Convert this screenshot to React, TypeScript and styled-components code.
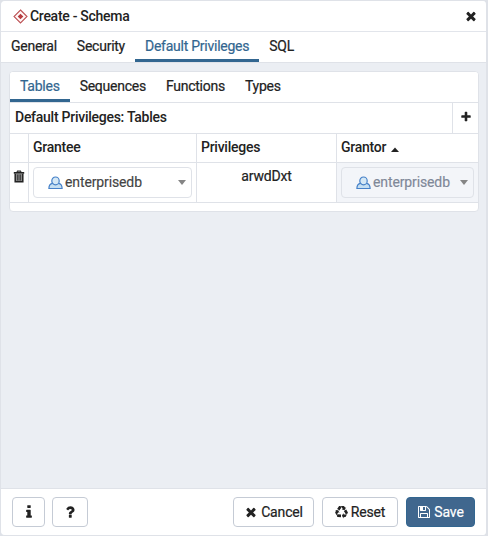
import React from "react";
import styled, { createGlobalStyle } from "styled-components";

const GlobalStyle = createGlobalStyle`
  * { box-sizing: border-box; }
  body { margin: 0; background: #dfe2e8; font: 400 14px/20px Roboto, sans-serif; letter-spacing: -0.18px; color: #222; }
  svg { display: block; flex: none; }
`;

const Dialog = styled.div`
  width: 488px;
  height: 536px;
  display: flex;
  flex-direction: column;
  border: 1px solid #dfe2e8;
  border-right-width: 2px;
  border-radius: 5px;
  overflow: hidden;
  background: #ebeef3;
`;

const TitleBar = styled.header`
  height: 31px;
  flex: none;
  display: flex;
  align-items: center;
  padding: 0 8px 0 12px;
  background: #fff;
  border-bottom: 1px solid #e2e5eb;
`;

const Title = styled.h1`
  flex: 1;
  margin: -1px 0 0 2px;
  font-size: 14px;
  font-weight: 500;
  letter-spacing: -0.28px;
`;

const TabBar = styled.nav<{ $height: number }>`
  height: ${(p) => p.$height}px;
  flex: none;
  display: flex;
  background: #fff;
  border-bottom: 1px solid #dfe2e8;
`;

const Tab = styled.button<{ $active?: boolean }>`
  border: 0;
  background: none;
  font: inherit;
  letter-spacing: -0.25px;
  padding: 0 10px 2px;
  color: ${(p) => (p.$active ? "#326690" : "#222")};
  -webkit-text-stroke: 0.2px currentColor;
  box-shadow: ${(p) => (p.$active ? "inset 0 -3px #326690" : "none")};
`;

const Content = styled.main`
  flex: 1;
  padding: 8px 7px 0 8px;
`;

const Panel = styled.section`
  height: 141px;
  background: #fff;
  border: 1px solid #dfe2e8;
  border-radius: 4px;
  overflow: hidden;
`;

const GridTitle = styled.div`
  height: 31px;
  display: flex;
  border-bottom: 1px solid #dfe2e8;
`;

const GridTitleText = styled.h2`
  flex: 1;
  margin: 0;
  padding: 4px 5px 0;
  font-size: 14px;
  font-weight: 500;
  letter-spacing: -0.26px;
`;

const AddButton = styled.button`
  width: 26px;
  padding: 0 0 3px;
  border: 0;
  border-left: 1px solid #dfe2e8;
  background: none;
  color: #222;
  display: grid;
  place-items: center;
`;

const GridRow = styled.div<{ $height: number }>`
  display: grid;
  grid-template-columns: 18px 168px 140px 1fr;
  height: ${(p) => p.$height}px;
  border-bottom: 1px solid #dfe2e8;
`;

const HeadCell = styled.div`
  display: flex;
  align-items: center;
  gap: 5px;
  padding: 0 4px 2px;
  font-weight: 500;
  letter-spacing: -0.26px;
  & + & { border-left: 1px solid #dfe2e8; }
`;

const Cell = styled.div<{ $muted?: boolean }>`
  padding: 4px;
  background: ${(p) => (p.$muted ? "#f3f5f9" : "#fff")};
  border-left: 1px solid #dfe2e8;
`;

const DeleteCell = styled(Cell)`
  padding: 7px 0 0 3px;
  border-left: 0;
`;

const PrivilegeCell = styled(Cell)`
  padding-top: 3px;
  text-align: center;
  -webkit-text-stroke: 0.2px currentColor;
`;

const Select = styled.div<{ $disabled?: boolean }>`
  height: 31px;
  display: flex;
  align-items: center;
  padding: 0 5px 0 14px;
  border: 1px solid #dfe2e8;
  border-radius: 4px;
  color: ${(p) => (p.$disabled ? "#7f8898" : "#444")};
  -webkit-text-stroke: 0.15px currentColor;
`;

const SelectText = styled.span`
  flex: 1;
  margin: -2px 0 0 2px;
  letter-spacing: -0.12px;
`;

const Footer = styled.footer`
  height: 47px;
  flex: none;
  display: flex;
  gap: 7px;
  padding: 8px 11px 0 11px;
  background: #fff;
  border-top: 1px solid #dfe2e8;
`;

const Button = styled.button<{ $width: number; $primary?: boolean }>`
  width: ${(p) => p.$width}px;
  height: 30px;
  padding: 0;
  display: flex;
  align-items: center;
  justify-content: center;
  gap: 3px;
  font: inherit;
  letter-spacing: -0.15px;
  -webkit-text-stroke: 0.2px currentColor;
  border-radius: 4px;
  border: 1px solid ${(p) => (p.$primary ? "#326690" : "#c5cbd5")};
  background: ${(p) => (p.$primary ? "#40678e" : "#fff")};
  color: ${(p) => (p.$primary ? "#fff" : "#222")};
`;

const Actions = styled.div`
  display: flex;
  gap: 8px;
  margin-left: auto;
`;

const glyphs = {
  times:
    "M1490 1322q0 40-28 68l-136 136q-28 28-68 28t-68-28l-294-294-294 294q-28 28-68 28t-68-28l-136-136q-28-28-28-68t28-68l294-294-294-294q-28-28-28-68t28-68l136-136q28-28 68-28t68 28l294 294 294-294q28-28 68-28t68 28l136 136q28 28 28 68t-28 68l-294 294 294 294q28 28 28 68z",
  plus:
    "M1600 736v192q0 40-28 68t-68 28h-416v416q0 40-28 68t-68 28h-192q-40 0-68-28t-28-68v-416h-416q-40 0-68-28t-28-68v-192q0-40 28-68t68-28h416v-416q0-40 28-68t68-28h192q40 0 68 28t28 68v416h416q40 0 68 28t28 68z",
  info:
    "M1216 1344v128q0 26-19 45t-45 19h-512q-26 0-45-19t-19-45v-128q0-26 19-45t45-19h64v-384h-64q-26 0-45-19t-19-45v-128q0-26 19-45t45-19h384q26 0 45 19t19 45v576h64q26 0 45 19t19 45zm-128-1152v192q0 26-19 45t-45 19h-256q-26 0-45-19t-19-45v-192q0-26 19-45t45-19h256q26 0 45 19t19 45z",
  question:
    "M1088 1256v240q0 16-12 28t-28 12h-240q-16 0-28-12t-12-28v-240q0-16 12-28t28-12h240q16 0 28 12t12 28zm316-600q0 54-15.500 101t-35 76.500-55 59.500-57.500 43.500-61 35.500q-41 23-68.500 65t-27.500 67q0 17-12 32.500t-28 15.500h-240q-15 0-25.500-18.500t-10.500-37.500v-45q0-83 65-156.500t143-108.500q59-27 84-56t25-76q0-42-46.500-74t-107.500-32q-65 0-108 29-35 25-107 115-13 16-31 16-12 0-25-8l-164-125q-13-10-15.500-25t5.500-28q160-266 464-266 80 0 161 31t146 83 106 127.500 41 158.500z",
  recycle:
    "M836 1169l-15 368-2 22-420-29q-36-3-67-31.500t-47-65.500q-11-27-14.500-55t4-65 12-55 21.500-64 19-53q78 12 509 28zm-387-586l180 379-147-92q-63 72-111.500 144.500t-72.500 125-39.500 94.500-18.500 63l-4 21-190-357q-17-26-18-56t6-47l8-18q35-63 114-188l-140-86zm1231 517l-188 359q-12 29-36.500 46.500t-43.500 20.500l-18 4q-71 7-219 12l8 164-230-367 211-362 7 173q170 16 283 5t170-33zm-785-924q-47 63-265 435l-317-187-19-12 225-356q20-31 60-45t80-10q24 2 48.500 12t42 21 41.500 33 36 34.500 36 39.500 32 35zm655 307l212 363q18 37 12.500 76t-27.500 74q-13 20-33 37t-38 28-48.500 22-47 16-51.500 14-46 12q-34-72-265-436l313-195zm-143-226l142-83-220 373-419-20 151-86q-34-89-75-166t-75.500-123.500-64.500-80-47-46.500l-17-13 405 1q31-3 58 10.500t39 28.500l11 15q39 61 112 190z",
  floppy:
    "M512 1536h768v-384h-768v384zm896 0h128v-896q0-14-10-38.500t-20-34.500l-281-281q-10-10-34-20t-39-10v416q0 40-28 68t-68 28h-576q-40 0-68-28t-28-68v-416h-128v1280h128v-416q0-40 28-68t68-28h832q40 0 68 28t28 68v416zm-384-928v-320q0-13-9.500-22.500t-22.500-9.500h-192q-13 0-22.500 9.500t-9.500 22.500v320q0 13 9.500 22.500t22.500 9.500h192q13 0 22.500-9.500t9.500-22.500zm640 32v928q0 40-28 68t-68 28h-1344q-40 0-68-28t-28-68v-1344q0-40 28-68t68-28h928q40 0 88 20t76 48l280 280q28 28 48 76t20 88z",
};

function Glyph({ name, size = 14 }: { name: keyof typeof glyphs; size?: number }) {
  return (
    <svg width={size} height={size} viewBox="0 0 1792 1792" fill="currentColor">
      <path d={glyphs[name]} />
    </svg>
  );
}

function SchemaIcon() {
  return (
    <svg width="15" height="15" viewBox="0 0 15 15">
      <path d="M7.500 1 14 7.500 7.500 14 1 7.500Z" fill="#fff8f8" stroke="#bd5356" strokeWidth="1.100" />
      <path d="M7.500 4.700 10.300 7.500 7.500 10.300 4.700 7.500Z" fill="#b73d40" />
    </svg>
  );
}

function TrashIcon() {
  return (
    <svg width="12" height="13" viewBox="0 0 12 13">
      <path d="M4 2.300 4.500 1.100h3l.5 1.200" fill="none" stroke="#333" strokeWidth="1.200" />
      <path d="M.8 2.100h10.400v1.700H.8z" fill="#222" />
      <path d="M2.200 3.700v8h7.600v-8" fill="#888" stroke="#222" strokeWidth="1.500" />
      <path d="M4.500 4.500v6M6 4.500v6M7.500 4.500v6" stroke="#333" strokeWidth=".8" />
    </svg>
  );
}

function UserIcon() {
  return (
    <svg width="15" height="15" viewBox="0 0 15 15">
      <path d="M.9 13.500q0-4.800 3.700-5.200h5.800q3.700.4 3.700 5.200Z" fill="#c5dff2" stroke="#4580c8" strokeWidth="1.200" />
      <ellipse cx="7.500" cy="5.900" rx="3.700" ry="3.900" fill="#d5e8f5" stroke="#4580c8" strokeWidth="1.200" />
    </svg>
  );
}

function Caret() {
  return (
    <svg width="8" height="5" viewBox="0 0 8 5">
      <path d="M0 0h8L4 5Z" fill="#858585" />
    </svg>
  );
}

function RoleSelect({ disabled }: { disabled?: boolean }) {
  return (
    <Select $disabled={disabled} aria-disabled={disabled}>
      <UserIcon />
      <SelectText>enterprisedb</SelectText>
      <Caret />
    </Select>
  );
}

export default function App() {
  return (
    <>
      <GlobalStyle />
      <Dialog>
        <TitleBar>
          <SchemaIcon />
          <Title>Create - Schema</Title>
          <Glyph name="times" />
        </TitleBar>
        <TabBar $height={31}>
          <Tab>General</Tab>
          <Tab>Security</Tab>
          <Tab $active>Default Privileges</Tab>
          <Tab>SQL</Tab>
        </TabBar>
        <Content>
          <Panel>
            <TabBar $height={31}>
              <Tab $active>Tables</Tab>
              <Tab>Sequences</Tab>
              <Tab>Functions</Tab>
              <Tab>Types</Tab>
            </TabBar>
            <GridTitle>
              <GridTitleText>Default Privileges: Tables</GridTitleText>
              <AddButton aria-label="Add">
                <Glyph name="plus" size={12} />
              </AddButton>
            </GridTitle>
            <GridRow $height={29}>
              <HeadCell />
              <HeadCell>Grantee</HeadCell>
              <HeadCell>Privileges</HeadCell>
              <HeadCell>
                Grantor
                <svg width="8" height="10" viewBox="0 0 8 10">
                  <path d="M0 10 4 5.500 8 10Z" fill="#222" />
                </svg>
              </HeadCell>
            </GridRow>
            <GridRow $height={40}>
              <DeleteCell>
                <TrashIcon />
              </DeleteCell>
              <Cell>
                <RoleSelect />
              </Cell>
              <PrivilegeCell>arwdDxt</PrivilegeCell>
              <Cell $muted>
                <RoleSelect disabled />
              </Cell>
            </GridRow>
          </Panel>
        </Content>
        <Footer>
          <Button $width={33} aria-label="Information">
            <Glyph name="info" size={16} />
          </Button>
          <Button $width={36} aria-label="Help">
            <Glyph name="question" size={16} />
          </Button>
          <Actions>
            <Button $width={81}>
              <Glyph name="times" size={14} />
              Cancel
            </Button>
            <Button $width={76}>
              <Glyph name="recycle" size={13} />
              Reset
            </Button>
            <Button $width={69} $primary>
              <Glyph name="floppy" size={14} />
              Save
            </Button>
          </Actions>
        </Footer>
      </Dialog>
    </>
  );
}
